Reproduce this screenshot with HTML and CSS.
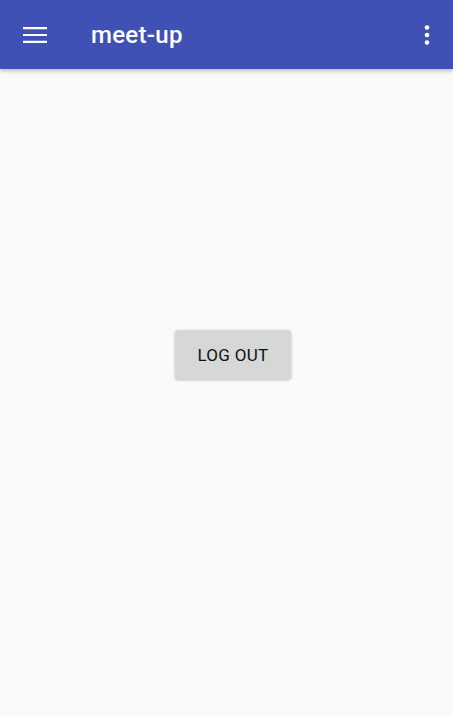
FILE: index.html
```html
<!DOCTYPE html>
<html>
<head>
<meta charset="utf-8">
<link rel="stylesheet" href="styles.css">
</head>
<body>
<div class="app">
  <header class="toolbar">
    <button class="icon-btn menu" aria-label="menu">
      <svg width="24" height="24" viewBox="0 0 24 24"><path d="M0 4h24v2.2H0zM0 10.9h24v2.2H0zM0 17.8h24v2.2H0z" fill="#fff"/></svg>
    </button>
    <h1 class="title">meet-up</h1>
    <button class="icon-btn more" aria-label="more">
      <svg width="24" height="24" viewBox="0 0 24 24"><circle cx="12" cy="4.5" r="2.3" fill="#fff"/><circle cx="12" cy="12" r="2.3" fill="#fff"/><circle cx="12" cy="19.5" r="2.3" fill="#fff"/></svg>
    </button>
  </header>
  <main class="content">
    <button class="logout">LOG OUT</button>
  </main>
</div>
</body>
</html>
```
FILE: styles.css
```css
html, body {
  margin: 0;
  padding: 0;
  height: 100%;
}
body {
  background: #fafafa;
  font-family: Roboto, "Noto Sans", sans-serif;
}
.app {
  display: flex;
  flex-direction: column;
  height: 716px;
}
.toolbar {
  height: 69px;
  background: #3f51b5;
  display: flex;
  align-items: center;
  box-shadow: 0 2px 4px rgba(0,0,0,0.25);
  position: relative;
  z-index: 1;
  flex: none;
}
.icon-btn {
  background: none;
  border: 0;
  padding: 0;
  display: flex;
  align-items: center;
  justify-content: center;
}
.menu {
  margin-left: 23px;
  width: 24px;
  height: 24px;
}
.title {
  margin: 0 0 0 44px;
  color: #fff;
  font-size: 24px;
  font-weight: 500;
  letter-spacing: 0.3px;
  flex: 1;
  line-height: 1;
}
.more {
  margin-right: 14px;
  width: 24px;
  height: 24px;
}
.content {
  flex: 1;
  display: flex;
  justify-content: center;
  align-items: flex-start;
  padding: 261px 0 0 13px;
}
.logout {
  width: 116px;
  height: 49px;
  background: #d6d7d7;
  border: 0;
  border-radius: 3px;
  font-family: Roboto, sans-serif;
  font-weight: 400;
  font-size: 17px;
  letter-spacing: 0.3px;
  color: #111;
  box-shadow: 0 1px 3px rgba(0,0,0,0.25);
}
```
